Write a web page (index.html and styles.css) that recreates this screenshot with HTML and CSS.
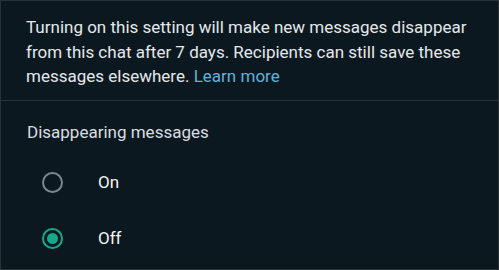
FILE: index.html
```html
<!DOCTYPE html>
<html lang="en">
  <head>
    <meta charset="UTF-8" />
    <meta name="viewport" content="width=device-width, initial-scale=1.0" />
    <title>Disappearing messages</title>
    <link rel="stylesheet" href="styles.css">
  </head>
  <body>
    <div class="wrapper">
      <section class="info">
        <p>
          Turning on this setting will make new messages disappear<br>
          from this chat after 7 days. Recipients can still save these<br>
          messages elsewhere. <a href="#">Learn more</a>
        </p>
      </section>
      <section class="options">
        <h2>Disappearing messages</h2>
        <ul class="radio-list">
          <li class="radio-item">
            <span class="radio"></span>
            <span class="radio-label">On</span>
          </li>
          <li class="radio-item">
            <span class="radio checked"></span>
            <span class="radio-label">Off</span>
          </li>
        </ul>
      </section>
    </div>
  </body>
</html>
```

FILE: styles.css
```css
* {
  margin: 0;
  padding: 0;
  box-sizing: border-box;
}
html,
body {
  height: 100%;
}
body {
  background-color: #0b1820;
  font-family: Roboto, "Liberation Sans", sans-serif;
  color: #e4e8ea;
}
.wrapper {
  height: 100%;
  border: 1px solid #2a3237;
}
.info {
  padding: 14px 10px 0 25px;
  height: 100px;
  border-bottom: 1px solid #29343a;
}
.info p {
  font-size: 17px;
  line-height: 24.5px;
  white-space: nowrap;
}
.info a {
  color: #62b1d8;
  text-decoration: none;
}
.options {
  padding: 20px 25px 0 26px;
}
.options h2 {
  font-size: 17px;
  font-weight: normal;
  line-height: 22px;
  color: #d9dee1;
}
.radio-list {
  list-style-type: none;
  margin-top: 11px;
}
.radio-item {
  display: flex;
  align-items: center;
  height: 56px;
  padding-left: 15px;
}
.radio {
  width: 21px;
  height: 21px;
  border: 2px solid #7c878d;
  border-radius: 50%;
  position: relative;
}
.radio.checked {
  border-color: #17a78d;
}
.radio.checked::after {
  content: "";
  position: absolute;
  left: 3px;
  top: 3px;
  width: 11px;
  height: 11px;
  border-radius: 50%;
  background-color: #17a78d;
}
.radio-label {
  margin-left: 35px;
  font-size: 17px;
  color: #f2f4f5;
}
```
